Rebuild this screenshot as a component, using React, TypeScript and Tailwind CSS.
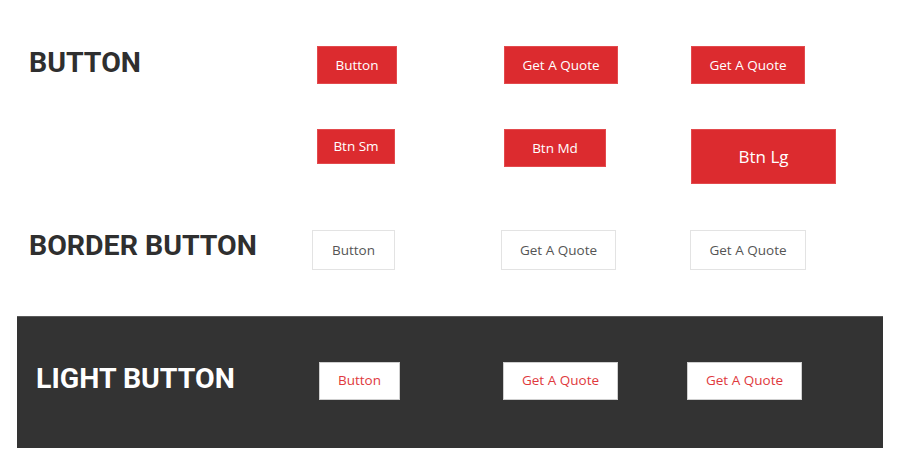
export default function App() {
  const heading = "font-['Roboto',sans-serif] text-[28.5px] font-bold leading-none tracking-normal";
  const btn = "flex items-center justify-center font-['Open_Sans',sans-serif] text-[13.5px]";
  const red = `${btn} bg-[#dc2b2f] text-white font-medium border border-[#e34a4d]`;
  const outline = `${btn} bg-white text-[#555555] border border-[#e3e3e3]`;
  const light = `${btn} bg-white text-[#e0393d] border border-[#cfcfcf]`;

  return (
    <main className="w-[900px] h-[470px] bg-white overflow-hidden">
      {/* Solid buttons */}
      <section className="pt-[46px] pl-[29px]">
        <div className="flex items-center">
          <h2 className={`${heading} text-[#2f2f2f] w-[288px] -mt-[4px]`}>BUTTON</h2>
          <div className="w-[187px]">
            <button className={`${red} w-[80px] h-[38px]`}>Button</button>
          </div>
          <div className="w-[187px]">
            <button className={`${red} w-[114px] h-[38px]`}>Get A Quote</button>
          </div>
          <div className="w-[187px]">
            <button className={`${red} w-[114px] h-[38px]`}>Get A Quote</button>
          </div>
        </div>
        <div className="flex items-start mt-[45px]">
          <div className="w-[288px]" />
          <div className="w-[187px]">
            <button className={`${red} w-[78px] h-[35px]`}>Btn Sm</button>
          </div>
          <div className="w-[187px]">
            <button className={`${red} w-[102px] h-[38px]`}>Btn Md</button>
          </div>
          <div className="w-[187px]">
            <button className={`${red} w-[145px] h-[55px] text-[17px]`}>Btn Lg</button>
          </div>
        </div>
      </section>

      {/* Border buttons */}
      <section className="flex items-center pl-[29px] mt-[46px]">
        <h2 className={`${heading} text-[#2f2f2f] w-[283px] -mt-[7px]`}>BORDER BUTTON</h2>
        <div className="w-[189px]">
          <button className={`${outline} w-[83px] h-[40px]`}>Button</button>
        </div>
        <div className="w-[189px]">
          <button className={`${outline} w-[115px] h-[40px]`}>Get A Quote</button>
        </div>
        <div>
          <button className={`${outline} w-[116px] h-[40px]`}>Get A Quote</button>
        </div>
      </section>

      {/* Light buttons */}
      <section className="mx-[17px] mt-[46px] w-[866px] h-[132px] bg-[#333333] border-t border-[#5a5a5a] flex items-center pl-[19px] pb-[4px]">
        <h2 className={`${heading} text-white w-[283px] -mt-[2px]`}>LIGHT BUTTON</h2>
        <div className="w-[184px]">
          <button className={`${light} w-[81px] h-[38px]`}>Button</button>
        </div>
        <div className="w-[184px]">
          <button className={`${light} w-[115px] h-[38px]`}>Get A Quote</button>
        </div>
        <div>
          <button className={`${light} w-[115px] h-[38px]`}>Get A Quote</button>
        </div>
      </section>
    </main>
  );
}
